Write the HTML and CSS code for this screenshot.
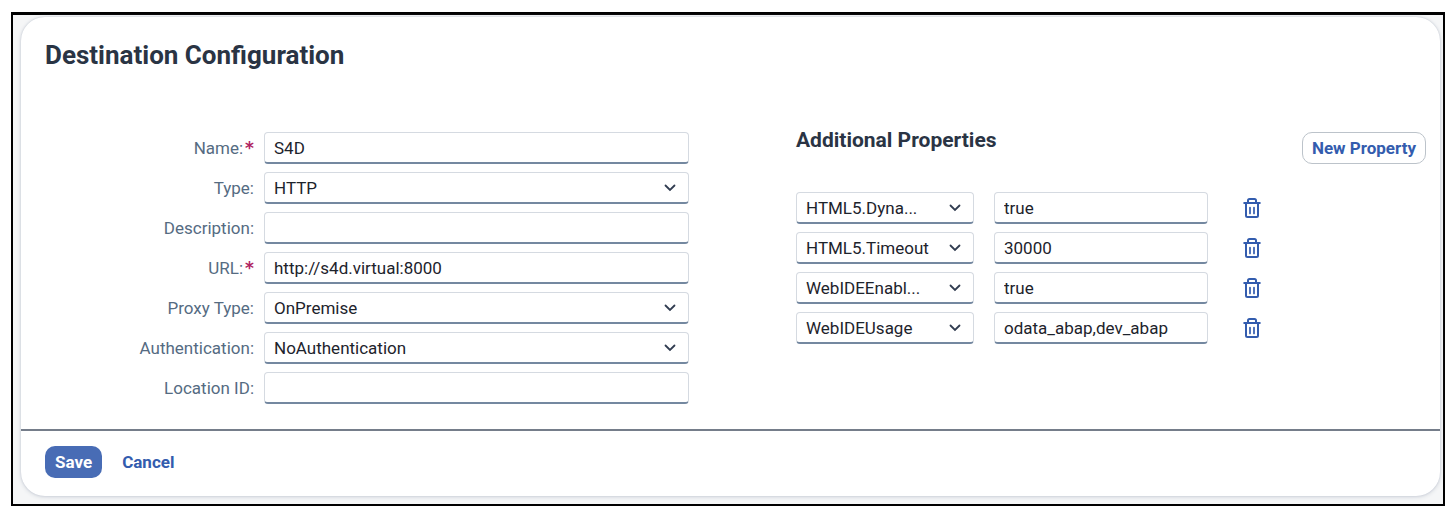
FILE: index.html
```html
<!DOCTYPE html>
<html lang="en">
<head>
  <meta charset="UTF-8">
  <meta name="viewport" content="width=device-width, initial-scale=1.0">
  <title>Destination Configuration</title>
  <link rel="stylesheet" href="styles.css">
</head>
<body>
  <svg class="sprite" aria-hidden="true">
    <symbol id="icon-delete" viewBox="0 0 18 22">
      <path d="M5 5.500V3.500a1.500 1.500 0 0 1 1.500-1.500h5a1.500 1.500 0 0 1 1.500 1.500v2M1.200 6h15.600M3 6v12.500a1.500 1.500 0 0 0 1.500 1.500h9a1.500 1.500 0 0 0 1.500-1.500V6" fill="none" stroke="currentColor" stroke-width="2" stroke-linecap="round"/>
      <path d="M7 10.500v6M11 10.500v6" fill="none" stroke="currentColor" stroke-width="1.700" stroke-linecap="round"/>
    </symbol>
  </svg>

  <main class="page">
    <form class="card">
      <h1>Destination Configuration</h1>

      <div class="content">
        <div class="fields">
          <label for="name" class="required">Name:</label>
          <input type="text" id="name" value="S4D" required>

          <label for="type">Type:</label>
          <select id="type">
            <option>HTTP</option>
            <option>RFC</option>
            <option>MAIL</option>
            <option>LDAP</option>
          </select>

          <label for="description">Description:</label>
          <input type="text" id="description">

          <label for="url" class="required">URL:</label>
          <input type="text" id="url" value="http://s4d.virtual:8000" required>

          <label for="proxy">Proxy Type:</label>
          <select id="proxy">
            <option>OnPremise</option>
            <option>Internet</option>
          </select>

          <label for="auth">Authentication:</label>
          <select id="auth">
            <option>NoAuthentication</option>
            <option>BasicAuthentication</option>
            <option>PrincipalPropagation</option>
          </select>

          <label for="location">Location ID:</label>
          <input type="text" id="location">
        </div>

        <section class="properties">
          <div class="properties-header">
            <h2>Additional Properties</h2>
            <button type="button" class="btn btn-outline">New Property</button>
          </div>

          <div class="property">
            <select aria-label="Property 1">
              <option value="HTML5.DynamicDestination">HTML5.Dyna...</option>
            </select>
            <input type="text" value="true" aria-label="Value 1">
            <button type="button" class="btn-icon" aria-label="Delete property 1"><svg><use href="#icon-delete"/></svg></button>
          </div>
          <div class="property">
            <select aria-label="Property 2">
              <option>HTML5.Timeout</option>
            </select>
            <input type="text" value="30000" aria-label="Value 2">
            <button type="button" class="btn-icon" aria-label="Delete property 2"><svg><use href="#icon-delete"/></svg></button>
          </div>
          <div class="property">
            <select aria-label="Property 3">
              <option value="WebIDEEnabled">WebIDEEnabl...</option>
            </select>
            <input type="text" value="true" aria-label="Value 3">
            <button type="button" class="btn-icon" aria-label="Delete property 3"><svg><use href="#icon-delete"/></svg></button>
          </div>
          <div class="property">
            <select aria-label="Property 4">
              <option>WebIDEUsage</option>
            </select>
            <input type="text" value="odata_abap,dev_abap" aria-label="Value 4">
            <button type="button" class="btn-icon" aria-label="Delete property 4"><svg><use href="#icon-delete"/></svg></button>
          </div>
        </section>
      </div>

      <footer>
        <button type="submit" class="btn btn-primary">Save</button>
        <button type="button" class="btn btn-link">Cancel</button>
      </footer>
    </form>
  </main>
</body>
</html>
```

FILE: styles.css
```css
* {
  box-sizing: border-box;
}
body {
  margin: 0;
  padding: 12px 9px 10px 11px;
  background: #fff;
  color: #1d2d3e;
  font-family: Roboto, "Liberation Sans", sans-serif;
  font-size: 17px;
}
.sprite {
  display: none;
}
.page {
  padding: 2px 3px 8px 8px;
  border: 2px solid #000;
  border-top-width: 3px;
  background: #f5f6f7;
}
.card {
  border-radius: 24px;
  background: #fff;
  box-shadow: 0 0 2px #c3c8d2, 0 1px 4px #d0d4dc;
}
h1 {
  margin: 0;
  padding: 22px 24px 0;
  font-size: 26px;
  line-height: 32px;
  color: #2a3444;
}
h2 {
  margin: 0;
  font-size: 21px;
  line-height: 16px;
  color: #2a3444;
}
.content {
  display: grid;
  grid-template-columns: 644fr 630fr;
  gap: 107px;
  padding: 61px 14px 25px 24px;
}
.fields {
  display: grid;
  grid-template-columns: 209fr 425fr;
  grid-auto-rows: 32px;
  gap: 8px 10px;
  align-items: center;
}
label {
  text-align: right;
  color: #556b82;
}
.required::after {
  content: "*";
  margin-left: 2px;
  color: #b02462;
  font-family: "DejaVu Sans", sans-serif;
  font-weight: bold;
  line-height: 16px;
}
input, select {
  width: 100%;
  min-width: 0;
  height: 32px;
  padding: 0 9px;
  border: 1px solid #d5dae1;
  border-bottom: 2px solid #7488a0;
  border-radius: 4px;
  background: #fff;
  color: #1d232c;
  font: inherit;
}
select {
  appearance: none;
  padding-right: 40px;
  overflow: hidden;
  text-overflow: ellipsis;
  white-space: nowrap;
  background: #fff url("data:image/svg+xml,%3Csvg xmlns='http://www.w3.org/2000/svg' width='12' height='8'%3E%3Cpath d='M1.500 1.500 6 6l4.500-4.500' fill='none' stroke='%23303c50' stroke-width='1.800' stroke-linecap='round'/%3E%3C/svg%3E") no-repeat right 12px center;
}
.properties-header {
  display: flex;
  justify-content: space-between;
  align-items: flex-start;
  margin-bottom: 28px;
}
.property {
  display: grid;
  grid-template-columns: 178fr 214fr 198fr;
  gap: 20px;
  height: 32px;
  margin-bottom: 8px;
}
.btn {
  height: 32px;
  padding: 0 9px;
  border: 1px solid transparent;
  border-radius: 10px;
  background: none;
  color: #335cae;
  font: inherit;
  font-weight: bold;
  cursor: pointer;
}
.btn-outline {
  border-color: #bcc3ca;
}
.btn-primary {
  background: #486cb5;
  color: #fff;
}
.btn-icon {
  display: flex;
  align-items: center;
  justify-content: center;
  width: 36px;
  height: 32px;
  margin-left: 6px;
  padding: 0;
  border: none;
  background: none;
  color: #335cae;
  cursor: pointer;
}
.btn-icon svg {
  width: 18px;
  height: 22px;
}
footer {
  display: flex;
  gap: 10px;
  padding: 15px 24px 18px;
  border-top: 2px solid #757d8a;
}
```
